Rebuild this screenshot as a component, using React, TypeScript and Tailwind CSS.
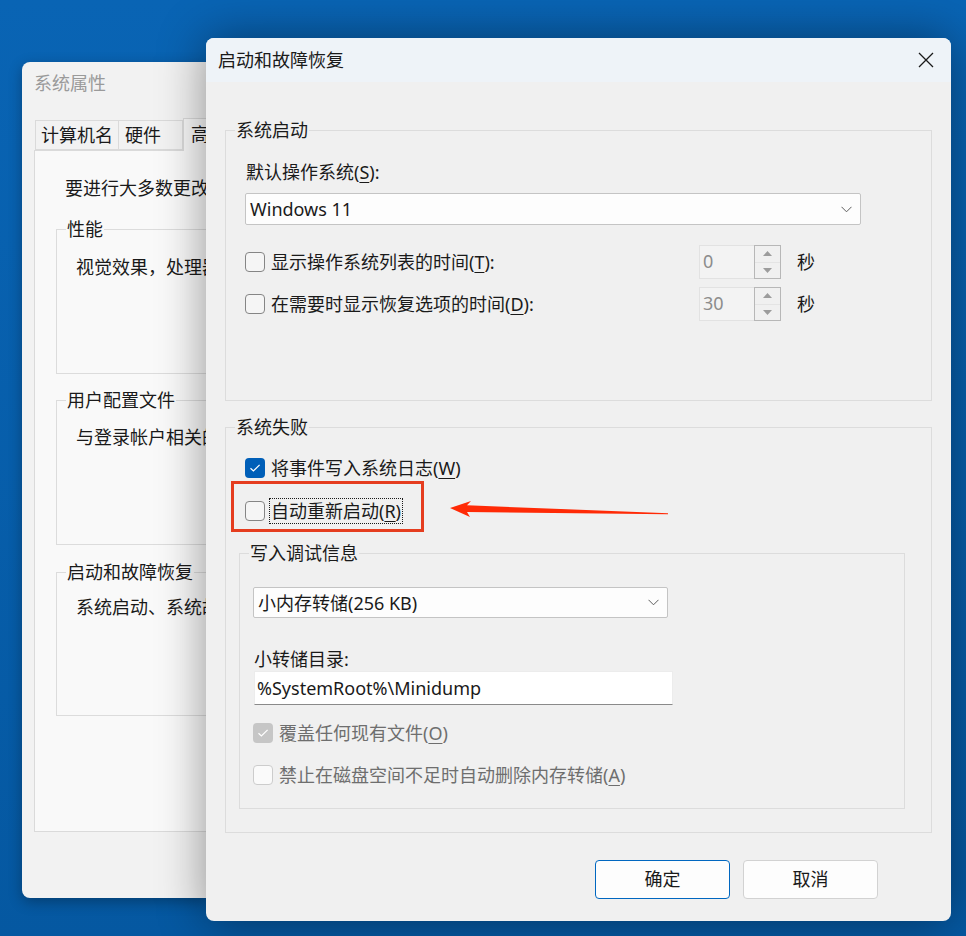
import type { ReactNode } from "react";

const FONT = "font-['Noto_Sans','Noto_Sans_CJK_SC',sans-serif]";

// Windows 11 style checkbox
const Check = ({ checked, disabled }: { checked?: boolean; disabled?: boolean }) => {
    if (checked) {
        return (
            <span
                className={`flex h-[20px] w-[20px] shrink-0 items-center justify-center rounded-[4px] ${
                    disabled ? "bg-[#c6c6c6]" : "bg-[#005fb8]"
                }`}
            >
                <svg width="12" height="10" viewBox="0 0 12 10">
                    <path d="M1.5 5.3 4.4 8 10.6 1.8" fill="none" stroke="white" strokeWidth="1.2" />
                </svg>
            </span>
        );
    }
    return (
        <span
            className={`h-[20px] w-[20px] shrink-0 rounded-[4px] border ${
                disabled ? "border-[#cccccc] bg-[#fafafa]" : "border-[#858585] bg-[#f5f5f5]"
            }`}
        />
    );
};

const Group = ({
    title,
    className,
    labelBg = "bg-[#f0f0f0]",
    children,
}: {
    title: string;
    className?: string;
    labelBg?: string;
    children?: ReactNode;
}) => (
    <div className={`relative border border-[#dcdcdc] ${className ?? ""}`}>
        <span className={`absolute left-[9px] top-[-13px] whitespace-nowrap px-[1px] leading-[24px] ${labelBg}`}>{title}</span>
        {children}
    </div>
);

const Chevron = () => (
    <svg width="11" height="7" viewBox="0 0 11 7">
        <path d="M0.5 0.8 5.5 5.8 10.5 0.8" fill="none" stroke="#5c5c5c" strokeWidth="1" />
    </svg>
);

const Select = ({ value, className }: { value: string; className: string }) => (
    <div
        className={`flex items-center justify-between rounded-[2px] border border-[#c4c4c4] bg-[#fdfdfd] pl-[4px] pr-[8px] ${className}`}
    >
        <span className="leading-[24px]">{value}</span>
        <Chevron />
    </div>
);

const Spin = ({ value }: { value: string }) => (
    <div className="flex h-[34px]">
        <div className="w-[55px] border border-r-0 border-[#e2e2e2] bg-[#f3f3f3] pl-[3px] leading-[30px] text-[#8c8c8c]">
            {value}
        </div>
        <div className="flex w-[27px] flex-col border border-[#b7b7b7] bg-[#f0f0f0]">
            <div className="flex flex-1 items-center justify-center border-b border-[#e4e4e4]">
                <svg width="9" height="5" viewBox="0 0 9 5">
                    <path d="M0 5 4.5 0 9 5Z" fill="#9c9c9c" />
                </svg>
            </div>
            <div className="flex flex-1 items-center justify-center">
                <svg width="9" height="5" viewBox="0 0 9 5">
                    <path d="M0 0 4.5 5 9 0Z" fill="#9c9c9c" />
                </svg>
            </div>
        </div>
    </div>
);

// only the part left of the front dialog is visible, so the window is clipped there
const BackWindow = () => (
    <div className="absolute left-[22px] top-[62px] z-0 flex h-[836px] w-[184px] flex-col overflow-hidden rounded-l-[8px] bg-[#f2f2f2] shadow-[0_4px_14px_rgba(0,0,0,0.3)]">
        <div className="flex h-[43px] shrink-0 items-center pl-[12px] text-[#9a9a9a]">系统属性</div>
        <div className="ml-[13px] mt-[15px] flex h-[30px] shrink-0 items-end">
            <div className="h-[30px] w-[83px] shrink-0 border border-r-0 border-[#dadada] pl-[5px] leading-[28px]">计算机名</div>
            <div className="h-[30px] w-[65px] shrink-0 border border-[#dadada] pl-[6px] leading-[28px]">硬件</div>
            <div className="relative -mb-[1px] h-[33px] w-[90px] shrink-0 overflow-hidden border border-b-0 border-[#dadada] bg-[#f9f9f9] pl-[7px] leading-[30px]">
                高级
            </div>
        </div>
        <div className="ml-[12px] h-[682px] w-[300px] shrink-0 border border-[#dadada] bg-[#f9f9f9]">
            <p className="ml-[30px] mt-[25px] whitespace-nowrap leading-[24px]">要进行大多数更改，你必须</p>
            <Group title="性能" labelBg="bg-[#f9f9f9]" className="ml-[21px] mt-[29px] h-[145px] w-[260px]">
                <p className="ml-[19px] mt-[25px] whitespace-nowrap leading-[24px]">视觉效果，处理器</p>
            </Group>
            <Group title="用户配置文件" labelBg="bg-[#f9f9f9]" className="ml-[21px] mt-[26px] h-[145px] w-[260px]">
                <p className="ml-[19px] mt-[24px] whitespace-nowrap leading-[24px]">与登录帐户相关的</p>
            </Group>
            <Group title="启动和故障恢复" labelBg="bg-[#f9f9f9]" className="ml-[21px] mt-[27px] h-[144px] w-[260px]">
                <p className="ml-[19px] mt-[22px] whitespace-nowrap leading-[24px]">系统启动、系统故</p>
            </Group>
        </div>
    </div>
);

const Dialog = () => (
    <div className="absolute left-[206px] top-[38px] z-10 flex h-[883px] w-[745px] flex-col overflow-hidden rounded-[8px] bg-[#f0f0f0] shadow-[0_0_48px_rgba(0,0,0,0.42)]">
        <div className="flex h-[44px] shrink-0 items-center justify-between bg-[#eef3f8] pl-[12px] pr-[17px]">
            <span>启动和故障恢复</span>
            <svg width="16" height="16" viewBox="0 0 16 16">
                <path d="M1 1 15 15M15 1 1 15" stroke="#1a1a1a" strokeWidth="1.3" />
            </svg>
        </div>

        {/* 系统启动 */}
        <Group title="系统启动" className="mx-[19px] mt-[48px] h-[271px] shrink-0">
            <div className="pl-[19px] pt-[29px]">
                <p className="pl-[1px] leading-[24px]">
                    默认操作系统(<span className="underline underline-offset-[3px]">S</span>):
                </p>
                <Select value="Windows 11" className="mt-[9px] h-[32px] w-[616px]" />
                <div className="mt-[20px] flex h-[34px] items-center">
                    <div className="flex w-[454px] items-center gap-[6px]">
                        <Check />
                        <span className="leading-[24px]">
                            显示操作系统列表的时间(<span className="underline underline-offset-[3px]">T</span>):
                        </span>
                    </div>
                    <Spin value="0" />
                    <span className="ml-[16px]">秒</span>
                </div>
                <div className="mt-[8px] flex h-[34px] items-center">
                    <div className="flex w-[454px] items-center gap-[6px]">
                        <Check />
                        <span className="leading-[24px]">
                            在需要时显示恢复选项的时间(<span className="underline underline-offset-[3px]">D</span>):
                        </span>
                    </div>
                    <Spin value="30" />
                    <span className="ml-[16px]">秒</span>
                </div>
            </div>
        </Group>

        {/* 系统失败 */}
        <Group title="系统失败" className="mx-[19px] mt-[26px] h-[406px] shrink-0">
            <div className="ml-[19px] mt-[28px] flex h-[24px] items-center gap-[6px]">
                <Check checked />
                <span className="leading-[24px]">
                    将事件写入系统日志(<span className="underline underline-offset-[3px]">W</span>)
                </span>
            </div>
            <div className="ml-[19px] mt-[19px] flex h-[24px] items-center gap-[4px]">
                <Check />
                <span className="border border-dotted border-[#1a1a1a] pl-[1px] pr-[1px] leading-[24px]">
                    自动重新启动(<span className="underline underline-offset-[3px]">R</span>)
                </span>
            </div>

            <Group title="写入调试信息" className="ml-[13px] mt-[30px] h-[256px] w-[666px]">
                <Select value="小内存转储(256 KB)" className="ml-[13px] mt-[33px] h-[31px] w-[415px]" />
                <p className="ml-[14px] mt-[29px] leading-[24px]">小转储目录:</p>
                <div className="ml-[14px] h-[34px] w-[419px] border border-[#ececec] border-b-[#8a8a8a] bg-white pl-[2px] leading-[32px]">
                    %SystemRoot%\Minidump
                </div>
                <div className="ml-[13px] mt-[16px] flex h-[24px] items-center gap-[6px] text-[#6e6e6e]">
                    <Check checked disabled />
                    <span className="leading-[24px]">
                        覆盖任何现有文件(<span className="underline underline-offset-[3px]">O</span>)
                    </span>
                </div>
                <div className="ml-[13px] mt-[18px] flex h-[24px] items-center gap-[6px] text-[#6e6e6e]">
                    <Check disabled />
                    <span className="leading-[24px]">
                        禁止在磁盘空间不足时自动删除内存转储(<span className="underline underline-offset-[3px]">A</span>)
                    </span>
                </div>
            </Group>
        </Group>

        <div className="mt-[27px] flex justify-end gap-[13px] pr-[73px]">
            <button className="h-[39px] w-[135px] rounded-[4px] border border-[#0067c0] bg-[#fdfdfd]">确定</button>
            <button className="h-[39px] w-[135px] rounded-[4px] border border-[#d2d2d2] bg-[#fdfdfd]">取消</button>
        </div>
    </div>
);

export default function App() {
    return (
        <div
            className={`relative h-[936px] w-[966px] overflow-hidden bg-gradient-to-b from-[#0964b4] to-[#0558a1] text-[18px] text-[#1a1a1a] ${FONT}`}
        >
            <BackWindow />
            <Dialog />

            {/* annotation: red box and arrow */}
            <div className="absolute left-[231px] top-[481px] z-20 h-[51px] w-[193px] border-[3px] border-[#e53d1f]" />
            <svg className="absolute left-[440px] top-[495px] z-20" width="240" height="30" viewBox="440 495 240 30">
                <path
                    d="M450 508 471 501 467 505.3 668 513.2 668 514.2 467 512 470 517Z"
                    fill="#ff2a06"
                />
            </svg>
        </div>
    );
}
